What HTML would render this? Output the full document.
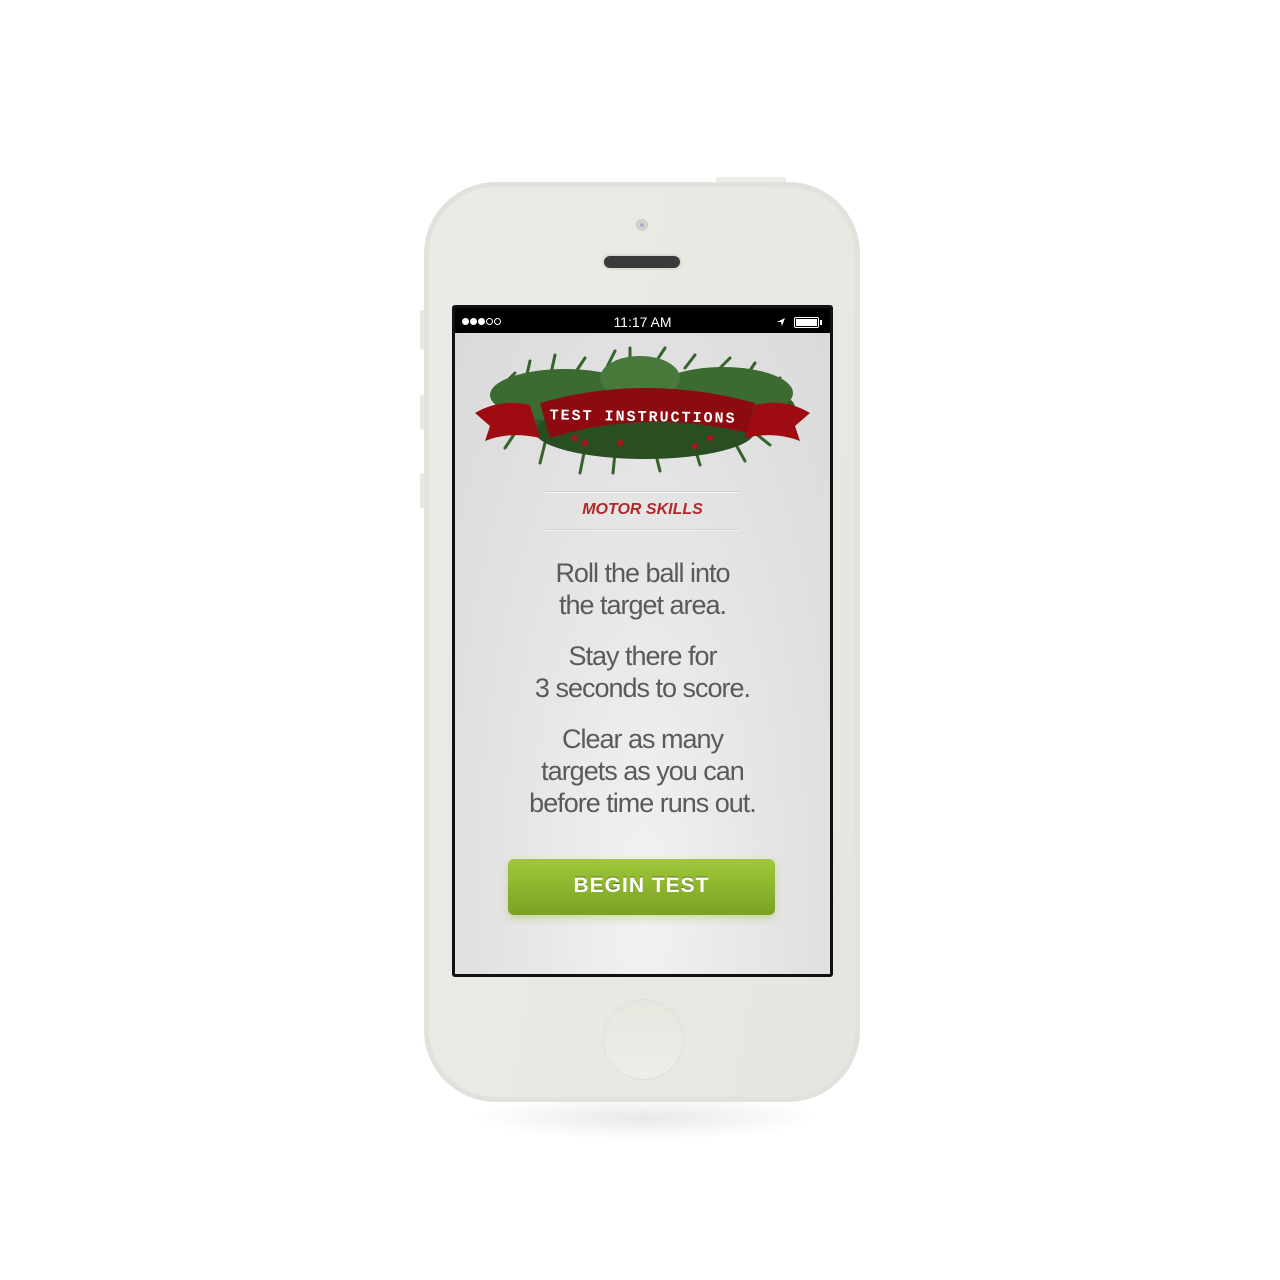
<!DOCTYPE html>
<html><head><meta charset="utf-8"><style>
*{margin:0;padding:0;box-sizing:border-box}
body{width:1280px;height:1280px;background:#fff;position:relative;overflow:hidden;font-family:"Liberation Sans",sans-serif}
.shadow{position:absolute;left:470px;top:1095px;width:350px;height:45px;border-radius:50%;background:radial-gradient(ellipse at center,rgba(0,0,0,.09),rgba(0,0,0,0) 70%)}
.topbtn{position:absolute;left:716px;top:177px;width:70px;height:6px;background:#ecece6;border-radius:2px}
.side{position:absolute;left:420px;width:5px;background:#e8e8e2;border-radius:2px}
.phone{position:absolute;left:424px;top:182px;width:436px;height:920px;border-radius:72px;background:linear-gradient(100deg,#ebebe6,#e9e9e3 50%,#e6e6e0);box-shadow:inset 0 0 0 5px #e2e2dc}
.cam{position:absolute;left:636px;top:219px;width:12px;height:12px;border-radius:50%;background:#d9d9d3;box-shadow:inset 0 0 0 3px #d0d0ca}
.cam:after{content:"";position:absolute;left:4px;top:4px;width:4px;height:4px;border-radius:50%;background:#a8a8d0}
.spk{position:absolute;left:604px;top:256px;width:76px;height:12px;border-radius:6px;background:#3a3a3a;box-shadow:0 0 0 2px #dcdcd5}
.home{position:absolute;left:603px;top:999px;width:81px;height:81px;border-radius:50%;background:linear-gradient(#e6e6df,#eeeee9);box-shadow:inset 0 0 0 1px #dedfd8}
.screen{position:absolute;left:452px;top:305px;width:381px;height:672px;background:#111;border-radius:3px}
.status{position:absolute;left:455px;top:308px;width:375px;height:25px;background:#000;color:#fff;font-size:14px}
.content{position:absolute;left:455px;top:333px;width:375px;height:641px;background:radial-gradient(ellipse at 50% 90%,#f2f2f2,#e2e2e2 60%,#dadada);overflow:hidden}
.txt{position:absolute;left:0;width:375px;text-align:center;color:#5a5a5a;font-size:27px;line-height:32px;letter-spacing:-1px}
.btn{position:absolute;left:53px;top:526px;width:267px;height:56px;border-radius:6px;background:linear-gradient(#a0c83a,#7ba124);box-shadow:0 4px 8px rgba(140,190,40,.35);color:#fff;font-weight:bold;font-size:21px;letter-spacing:1px;text-align:center;line-height:54px;text-shadow:0 -1px 0 rgba(0,0,0,.35)}
.rule{position:absolute;left:90px;width:194px;height:1px;background:#d0d0d0;box-shadow:0 1px 0 #f5f5f5}
</style></head><body>
<div class="shadow"></div>
<div class="topbtn"></div>
<div class="side" style="top:310px;height:40px"></div>
<div class="side" style="top:395px;height:35px"></div>
<div class="side" style="top:473px;height:35px"></div>
<div class="phone"></div>
<div class="cam"></div>
<div class="spk"></div>
<div class="home"></div>
<div class="screen"></div>
<div class="status">
 <div style="position:absolute;left:7px;top:10px;display:flex;gap:1px">
  <span style="width:7px;height:7px;border-radius:50%;background:#fff"></span><span style="width:7px;height:7px;border-radius:50%;background:#fff"></span><span style="width:7px;height:7px;border-radius:50%;background:#fff"></span><span style="width:7px;height:7px;border-radius:50%;border:1px solid #fff"></span><span style="width:7px;height:7px;border-radius:50%;border:1px solid #fff"></span>
 </div>
 <div style="position:absolute;left:0;width:375px;top:6px;text-align:center">11:17 AM</div>
 <svg style="position:absolute;left:321px;top:9px" width="10" height="10"><path d="M9 1L1 5 5 5 6 9Z" fill="#fff"/></svg>
 <div style="position:absolute;left:339px;top:9px;width:25px;height:11px;border:1px solid #fff;border-radius:2px;padding:1px"><div style="background:#fff;height:100%"></div></div>
 <div style="position:absolute;left:365px;top:12px;width:2px;height:5px;background:#fff"></div>
</div>
<div class="content">
 <svg style="position:absolute;left:0;top:0" width="375" height="150">
  <g stroke-width="3" stroke-linecap="round">
   <g stroke="#35632c">
    <path d="M45 55L60 40M70 50L75 28M95 45L100 22M120 40L130 25M150 38L160 18M175 35L175 15M200 30L210 15M230 35L240 22M260 40L275 25M290 45L300 30M310 55L325 45"/>
    <path d="M60 100L50 115M90 110L85 130M130 115L125 140M160 120L158 140M200 118L205 138M240 115L245 132M280 110L290 128M300 100L315 112"/>
   </g>
  </g>
  <g>
   <ellipse cx="190" cy="75" rx="150" ry="35" fill="#2f5a2a"/>
   <ellipse cx="110" cy="62" rx="75" ry="26" fill="#3b6b30"/>
   <ellipse cx="268" cy="60" rx="70" ry="26" fill="#3b6b30"/>
   <ellipse cx="190" cy="98" rx="110" ry="28" fill="#284e22"/>
   <ellipse cx="185" cy="45" rx="40" ry="22" fill="#47793a"/>
  </g>
  <g fill="#b3121a">
   <circle cx="120" cy="105" r="3"/><circle cx="130" cy="110" r="3"/><circle cx="255" cy="105" r="3"/><circle cx="240" cy="113" r="3"/><circle cx="165" cy="110" r="3"/>
  </g>
  <path d="M20 80 Q45 65 75 72 L85 105 Q55 98 30 108 L35 93 Z" fill="#9e0c12"/>
  <path d="M355 80 Q330 65 300 72 L290 105 Q320 98 345 108 L340 93 Z" fill="#9e0c12"/>
  <path d="M85 70 Q190 40 300 70 L292 100 Q190 75 95 105 Z" fill="#8c0a10"/>
  <text x="188" y="88" text-anchor="middle" fill="#fff" font-family="Liberation Mono,monospace" font-weight="bold" font-size="15" letter-spacing="2" transform="rotate(1 188 85)">TEST INSTRUCTIONS</text>
 </svg>
 <div class="rule" style="top:158px"></div>
 <div style="position:absolute;left:0;width:375px;top:168px;text-align:center;color:#b02a2a;font-style:italic;font-weight:bold;font-size:16px">MOTOR SKILLS</div>
 <div class="rule" style="top:196px"></div>
 <div class="txt" style="top:224px">Roll the ball into<br>the target area.</div>
 <div class="txt" style="top:307px">Stay there for<br>3 seconds to score.</div>
 <div class="txt" style="top:390px">Clear as many<br>targets as you can<br>before time runs out.</div>
 <div class="btn">BEGIN TEST</div>
</div>
</body></html>
